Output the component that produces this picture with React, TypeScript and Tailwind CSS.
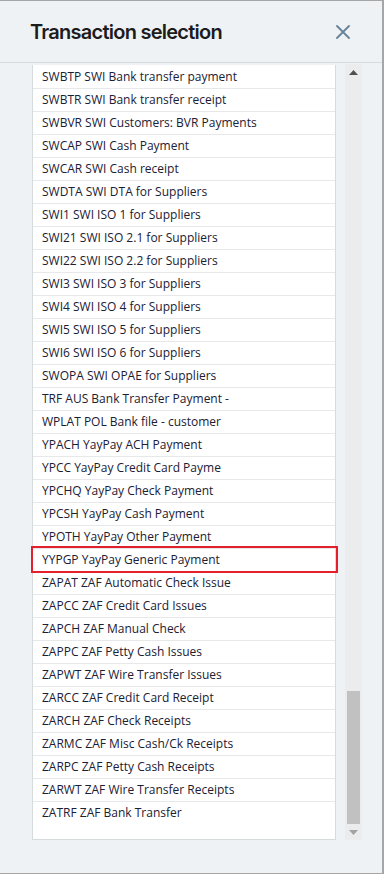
const transactions = [
  "SWBTP SWI Bank transfer payment",
  "SWBTR SWI Bank transfer receipt",
  "SWBVR SWI Customers: BVR Payments",
  "SWCAP SWI Cash Payment",
  "SWCAR SWI Cash receipt",
  "SWDTA SWI DTA for Suppliers",
  "SWI1 SWI ISO 1 for Suppliers",
  "SWI21 SWI ISO 2.1 for Suppliers",
  "SWI22 SWI ISO 2.2 for Suppliers",
  "SWI3 SWI ISO 3 for Suppliers",
  "SWI4 SWI ISO 4 for Suppliers",
  "SWI5 SWI ISO 5 for Suppliers",
  "SWI6 SWI ISO 6 for Suppliers",
  "SWOPA SWI OPAE for Suppliers",
  "TRF AUS Bank Transfer Payment -",
  "WPLAT POL Bank file - customer",
  "YPACH YayPay ACH Payment",
  "YPCC YayPay Credit Card Payme",
  "YPCHQ YayPay Check Payment",
  "YPCSH YayPay Cash Payment",
  "YPOTH YayPay Other Payment",
  "YYPGP YayPay Generic Payment",
  "ZAPAT ZAF Automatic Check Issue",
  "ZAPCC ZAF Credit Card Issues",
  "ZAPCH ZAF Manual Check",
  "ZAPPC ZAF Petty Cash Issues",
  "ZAPWT ZAF Wire Transfer Issues",
  "ZARCC ZAF Credit Card Receipt",
  "ZARCH ZAF Check Receipts",
  "ZARMC ZAF Misc Cash/Ck Receipts",
  "ZARPC ZAF Petty Cash Receipts",
  "ZARWT ZAF Wire Transfer Receipts",
  "ZATRF ZAF Bank Transfer"
];

const selected = "YYPGP";

export default function App() {
  return (
    <div className="flex h-[874px] w-[384px] flex-col border-t border-r-2 border-b border-[#a6a6a6] bg-[#eff2f4]">
      <div className="flex h-[62px] shrink-0 items-center justify-between border-b border-[#d6dbde] pl-[30px] pr-[32px]">
        <h2 className="pt-[1px] font-['Inter',sans-serif] text-[20px] font-semibold tracking-[-0.75px] text-[#1c1c1c]">
          Transaction selection
        </h2>
        <svg width="14" height="14" viewBox="0 0 14 14" className="text-[#65839a]">
          <path d="M1 1 L13 13 M13 1 L1 13" stroke="currentColor" strokeWidth="1.8" strokeLinecap="round" />
        </svg>
      </div>

      <div className="mt-[2px] flex gap-[9px] pl-[32px]">
        <ul className="w-[304px] border-x border-b border-[#d6dbde] bg-white font-['Open_Sans',sans-serif] text-[12px] text-[#1b2033]">
          {transactions.map((t) => (
            <li
              key={t}
              className="relative flex h-[23px] items-center border-b border-[#e6e8ea] pl-[9px] first:h-[24px] last:h-[22px] last:border-b-0"
            >
              {t}
              {t.startsWith(selected) ? (
                <span className="pointer-events-none absolute -top-[3px] -left-[2px] h-[27px] w-[307px] border-2 border-[#e3202c]" />
              ) : null}
            </li>
          ))}
        </ul>

        <div className="-mt-[1px] flex h-[776px] w-[17px] flex-col bg-[#ebeced]">
          <div className="flex h-[17px] items-center justify-center">
            <svg width="9" height="5" viewBox="0 0 9 5">
              <path d="M4.5 0 L9 5 L0 5 Z" fill="#505050" />
            </svg>
          </div>
          <div className="flex flex-1 flex-col justify-end px-[2px]">
            <div className="h-[133px] bg-[#c1c1c1]" />
          </div>
          <div className="flex h-[16px] items-center justify-center">
            <svg width="9" height="5" viewBox="0 0 9 5">
              <path d="M0 0 L9 0 L4.5 5 Z" fill="#a3a3a3" />
            </svg>
          </div>
        </div>
      </div>
    </div>
  );
}
